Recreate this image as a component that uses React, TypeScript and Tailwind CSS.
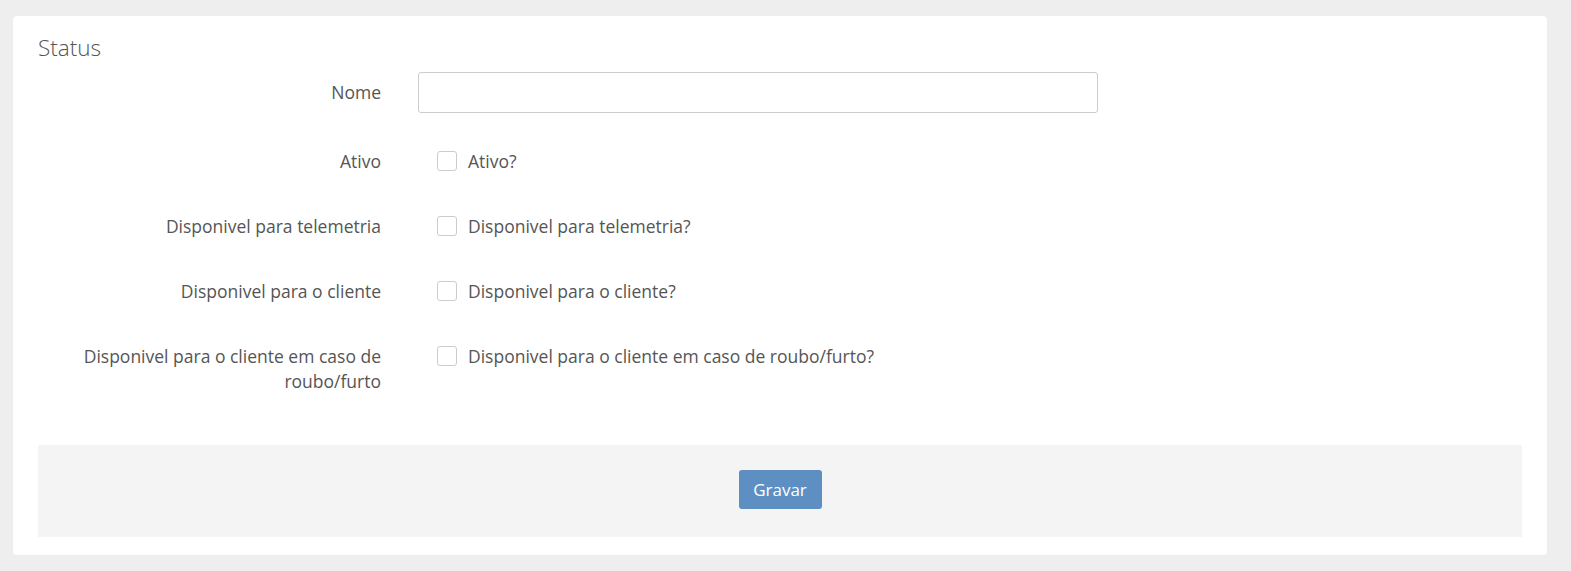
import React from "react";

const checkRows = [
  { label: "Ativo", text: "Ativo?" },
  { label: "Disponivel para telemetria", text: "Disponivel para telemetria?" },
  { label: "Disponivel para o cliente", text: "Disponivel para o cliente?" },
  {
    label: "Disponivel para o cliente em caso de roubo/furto",
    text: "Disponivel para o cliente em caso de roubo/furto?",
  },
];

export default function App() {
  return (
    <div className="min-h-[571px] bg-[#eeeeee] pt-[16px] pb-[18px] pl-[13px] font-['Open_Sans',sans-serif] text-[#555]">
      <div className="w-[1534px] bg-white rounded-[4px] px-[25px] pt-[18px] pb-[18px]">
        <h2 className="text-[22.5px] leading-[30px] font-light text-[#555] -mt-[1px]">Status</h2>

        <form className="mt-[9px]">
          {/* Nome */}
          <div className="flex items-start">
            <label className="w-[343px] shrink-0 text-right text-[17.5px] leading-[25px] pt-[8px]">Nome</label>
            <input
              type="text"
              className="ml-[37px] w-[680px] h-[41px] border border-[#cccccc] rounded-[3px] px-3 text-[17px] outline-none"
            />
          </div>

          {checkRows.map((row, i) => (
            <div key={row.label} className={`flex items-start ${i === 0 ? "mt-[36px]" : "mt-[40px]"}`}>
              <label className="w-[343px] shrink-0 text-right text-[17.5px] leading-[25px]">{row.label}</label>
              <label className="ml-[56px] flex items-start gap-[11px] text-[17.5px] leading-[25px]">
                <span className="mt-[2px] w-[20px] h-[20px] rounded-[3px] border border-[#cccccc] bg-white shrink-0" />
                <span>{row.text}</span>
              </label>
            </div>
          ))}

          {/* Footer */}
          <div className="mt-[51px] bg-[#f4f4f4] h-[92px] flex items-center justify-center">
            <button
              type="button"
              className="-mt-[3px] h-[39px] w-[83px] rounded-[3px] bg-[#5e8fc3] text-white text-[17px]"
            >
              Gravar
            </button>
          </div>
        </form>
      </div>
    </div>
  );
}
